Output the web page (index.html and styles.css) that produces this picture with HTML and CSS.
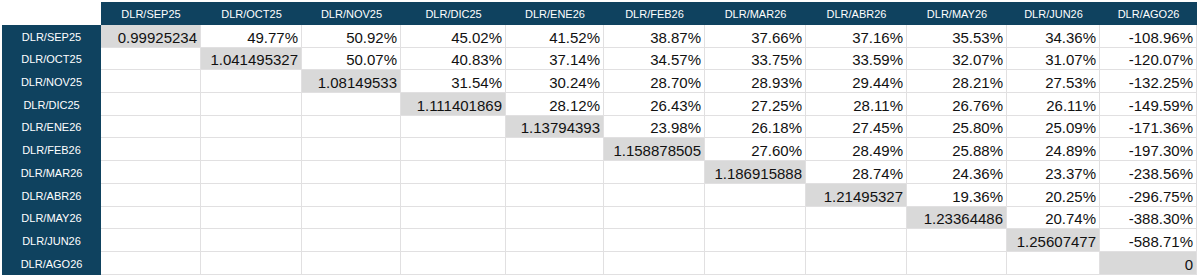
FILE: index.html
```html
<!DOCTYPE html>
<html lang="es">
<head>
<meta charset="utf-8">
<title>Matriz DLR</title>
<link rel="stylesheet" href="styles.css">
</head>
<body>
<div class="sheet">
  <div class="grid">
    <div class="corner"></div>
    <div class="hd">DLR/SEP25</div>
    <div class="hd">DLR/OCT25</div>
    <div class="hd">DLR/NOV25</div>
    <div class="hd">DLR/DIC25</div>
    <div class="hd">DLR/ENE26</div>
    <div class="hd">DLR/FEB26</div>
    <div class="hd">DLR/MAR26</div>
    <div class="hd">DLR/ABR26</div>
    <div class="hd">DLR/MAY26</div>
    <div class="hd">DLR/JUN26</div>
    <div class="hd">DLR/AGO26</div>

    <div class="rl">DLR/SEP25</div>
    <div class="c dg">0.99925234</div><div class="c">49.77%</div><div class="c">50.92%</div><div class="c">45.02%</div><div class="c">41.52%</div><div class="c">38.87%</div><div class="c">37.66%</div><div class="c">37.16%</div><div class="c">35.53%</div><div class="c">34.36%</div><div class="c">-108.96%</div>

    <div class="rl">DLR/OCT25</div>
    <div class="c"></div><div class="c dg">1.041495327</div><div class="c">50.07%</div><div class="c">40.83%</div><div class="c">37.14%</div><div class="c">34.57%</div><div class="c">33.75%</div><div class="c">33.59%</div><div class="c">32.07%</div><div class="c">31.07%</div><div class="c">-120.07%</div>

    <div class="rl">DLR/NOV25</div>
    <div class="c"></div><div class="c"></div><div class="c dg">1.08149533</div><div class="c">31.54%</div><div class="c">30.24%</div><div class="c">28.70%</div><div class="c">28.93%</div><div class="c">29.44%</div><div class="c">28.21%</div><div class="c">27.53%</div><div class="c">-132.25%</div>

    <div class="rl">DLR/DIC25</div>
    <div class="c"></div><div class="c"></div><div class="c"></div><div class="c dg">1.111401869</div><div class="c">28.12%</div><div class="c">26.43%</div><div class="c">27.25%</div><div class="c">28.11%</div><div class="c">26.76%</div><div class="c">26.11%</div><div class="c">-149.59%</div>

    <div class="rl">DLR/ENE26</div>
    <div class="c"></div><div class="c"></div><div class="c"></div><div class="c"></div><div class="c dg">1.13794393</div><div class="c">23.98%</div><div class="c">26.18%</div><div class="c">27.45%</div><div class="c">25.80%</div><div class="c">25.09%</div><div class="c">-171.36%</div>

    <div class="rl">DLR/FEB26</div>
    <div class="c"></div><div class="c"></div><div class="c"></div><div class="c"></div><div class="c"></div><div class="c dg">1.158878505</div><div class="c">27.60%</div><div class="c">28.49%</div><div class="c">25.88%</div><div class="c">24.89%</div><div class="c">-197.30%</div>

    <div class="rl">DLR/MAR26</div>
    <div class="c"></div><div class="c"></div><div class="c"></div><div class="c"></div><div class="c"></div><div class="c"></div><div class="c dg">1.186915888</div><div class="c">28.74%</div><div class="c">24.36%</div><div class="c">23.37%</div><div class="c">-238.56%</div>

    <div class="rl">DLR/ABR26</div>
    <div class="c"></div><div class="c"></div><div class="c"></div><div class="c"></div><div class="c"></div><div class="c"></div><div class="c"></div><div class="c dg">1.21495327</div><div class="c">19.36%</div><div class="c">20.25%</div><div class="c">-296.75%</div>

    <div class="rl">DLR/MAY26</div>
    <div class="c"></div><div class="c"></div><div class="c"></div><div class="c"></div><div class="c"></div><div class="c"></div><div class="c"></div><div class="c"></div><div class="c dg">1.23364486</div><div class="c">20.74%</div><div class="c">-388.30%</div>

    <div class="rl">DLR/JUN26</div>
    <div class="c"></div><div class="c"></div><div class="c"></div><div class="c"></div><div class="c"></div><div class="c"></div><div class="c"></div><div class="c"></div><div class="c"></div><div class="c dg">1.25607477</div><div class="c">-588.71%</div>

    <div class="rl">DLR/AGO26</div>
    <div class="c"></div><div class="c"></div><div class="c"></div><div class="c"></div><div class="c"></div><div class="c"></div><div class="c"></div><div class="c"></div><div class="c"></div><div class="c"></div><div class="c dg">0</div>
  </div>
</div>
</body>
</html>
```
FILE: styles.css
```css
html, body {
  margin: 0;
  padding: 0;
  background: #ffffff;
}

.sheet {
  padding: 2px 0 0 2px;
  width: 1200px;
  height: 279px;
  box-sizing: border-box;
  overflow: hidden;
  font-family: "Liberation Sans", Arial, sans-serif;
}

.grid {
  display: grid;
  grid-template-columns: 99px 100px 101px 99px 105px 98px 101px 101px 101px 100px 93px 97px;
  grid-template-rows: 23px 23px 22px 23px 23px 22px 23px 23px 23px 22px 23px 23px;
}

.corner {
  background: #ffffff;
}

.hd {
  background: #0f425f;
  color: #ffffff;
  font-size: 11px;
  line-height: 13px;
  display: flex;
  align-items: flex-end;
  justify-content: center;
  padding-bottom: 4px;
  box-sizing: border-box;
}

.rl {
  background: #0f425f;
  color: #ffffff;
  font-size: 11px;
  line-height: 13px;
  display: flex;
  align-items: center;
  justify-content: center;
  padding-top: 1px;
  box-sizing: border-box;
}

.c {
  box-sizing: border-box;
  border-right: 1px solid #e1e0e1;
  border-bottom: 1px solid #e1e0e1;
  color: #111111;
  font-size: 15px;
  line-height: 17px;
  display: flex;
  align-items: flex-end;
  justify-content: flex-end;
  padding: 0 3px 1px 0;
  white-space: nowrap;
}

.dg {
  background: #d9d9d9;
}
```
